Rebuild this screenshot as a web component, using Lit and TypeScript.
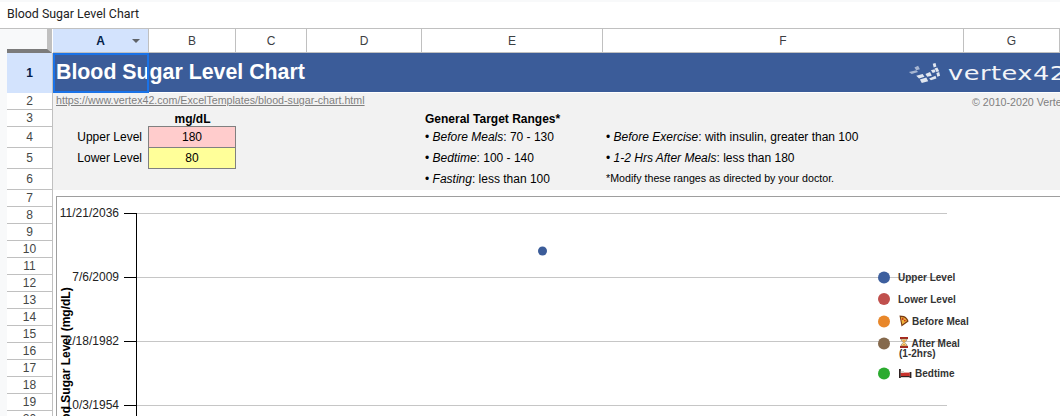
import { LitElement, html, css, svg } from "lit";
import { customElement } from "lit/decorators.js";

const COLS = ["A", "B", "C", "D", "E", "F", "G"];
const GRID_YS = [213, 277, 341, 405];
const Y_LABELS = ["11/21/2036", "7/6/2009", "2/18/1982", "10/3/1954"];
const LEGEND_DOTS: [number, string][] = [
  [277.5, "#3d5f9e"],
  [299, "#c0504d"],
  [321.5, "#e8872a"],
  [343.5, "#85694c"],
  [373.5, "#2bab2f"],
];
const LOGO_TILES = [
  "M1 10 L9 8 L11 10 L4 12 Z",
  "M7 5 L11 3 L13 7 L9 8 Z",
  "M9 14 L16 12 L18 15 L12 17 Z",
  "M13 18 L20 16 L22 20 L15 22 Z",
  "M19 12 L24 10 L26 14 L21 15 Z",
  "M23 17 L30 14 L31 17 L25 19 Z",
  "M25 8 L29 7 L30 10 L27 11 Z",
  "M27 1 L30 0 L31 4 L28 5 Z",
  "M29 6 L32 5 L34 9 L31 10 Z",
  "M31 11 L34 10 L35 14 L32 15 Z",
];

@customElement("app-root")
export class AppRoot extends LitElement {
  static styles = css`
    :host {
      display: block;
      position: relative;
      width: 1060px;
      height: 416px;
      overflow: hidden;
      box-sizing: border-box;
      padding: 2px 0 0 7px;
      background: #f8f9fa;
      font-family: "Liberation Sans", Arial, sans-serif;
      font-size: 12px;
      color: #000;
    }
    .title {
      height: 26px;
      line-height: 24px;
      background: #fff;
      border-bottom: 1px solid #c0c0c0;
      margin-left: -7px;
      padding-left: 7px;
      font-family: Roboto, "Liberation Sans", sans-serif;
      font-size: 12.4px;
      color: #222;
      white-space: nowrap;
    }
    .sheet {
      position: relative;
      display: grid;
      grid-template-columns: 46px 96px 87px 71px 115px 181px 361px 96px;
      grid-template-rows: 24px 40px 17px 17px 21px 21px 21px repeat(14, 17px);
      background: #fff;
    }
    .corner {
      box-sizing: border-box;
      background: #f8f9fa;
      border-right: 5px solid #c0c0c0;
      border-bottom: 4px solid #7b7b7b;
      margin-right: 1px;
    }
    .col {
      position: relative;
      box-sizing: border-box;
      display: flex;
      align-items: center;
      justify-content: center;
      border-right: 1px solid #c0c0c0;
      border-bottom: 1px solid #c0c0c0;
      color: #3c4043;
    }
    .col.sel {
      background: #d3e3fd;
      color: #041e49;
      font-weight: bold;
    }
    .tri {
      position: absolute;
      right: 8px;
      top: 10px;
      width: 0;
      height: 0;
      border-left: 4px solid transparent;
      border-right: 4px solid transparent;
      border-top: 4px solid #5f6368;
    }
    .rh {
      box-sizing: border-box;
      display: flex;
      align-items: center;
      justify-content: center;
      background: #fff;
      border-right: 1px solid #c0c0c0;
      border-bottom: 1px solid #c0c0c0;
      color: #444746;
      padding-bottom: 1px;
    }
    .rh.sel {
      background: #d3e3fd;
      color: #041e49;
      font-weight: bold;
      border-bottom: none;
    }
    .banner {
      grid-column: 2 / -1;
      position: relative;
      box-sizing: border-box;
      display: flex;
      align-items: center;
      background: #3b5c99;
      color: #fff;
      padding: 0 0 0 3px;
      margin-bottom: 1px;
      white-space: nowrap;
    }
    .banner-title {
      flex: 1;
      font-size: 21.33px;
      font-weight: bold;
    }
    .selection {
      position: absolute;
      left: 0;
      top: 0;
      box-sizing: border-box;
      width: 96px;
      height: 40px;
      border: 2px solid #1a73e8;
    }
    .logo {
      display: flex;
      align-items: center;
      width: 152px;
      flex: none;
    }
    .logo svg {
      flex: none;
      margin-right: 7px;
    }
    .wordmark {
      font-family: "DejaVu Sans", sans-serif;
      font-size: 20px;
      letter-spacing: 0.4px;
      color: #f2f4f8;
      line-height: 1;
      transform: scaleX(1.28);
      transform-origin: left center;
    }
    .linkrow {
      grid-column: 2 / 8;
      box-sizing: border-box;
      background: #f2f2f2;
      padding-left: 3px;
      font-size: 10.67px;
      line-height: 15px;
      color: #7f7f7f;
      text-decoration: underline;
      white-space: nowrap;
    }
    .copy {
      box-sizing: border-box;
      background: #f2f2f2;
      padding: 2px 0 0 8px;
      font-size: 10.67px;
      line-height: 15px;
      color: #7f7f7f;
      white-space: nowrap;
    }
    .c {
      box-sizing: border-box;
      display: flex;
      align-items: center;
      background: #f2f2f2;
      white-space: nowrap;
      min-width: 0;
    }
    .c.pad {
      padding-left: 3px;
    }
    .c.up {
      padding-bottom: 2px;
    }
    .c.small {
      font-size: 10.67px;
      padding-bottom: 3px;
    }
    .c.label {
      justify-content: flex-end;
      padding-right: 7px;
      padding-bottom: 2px;
    }
    .c.head {
      justify-content: center;
      font-weight: bold;
    }
    .c.hi,
    .c.lo {
      justify-content: center;
      border: 1px solid #808080;
      margin-left: -1px;
      margin-top: -1px;
    }
    .c.hi {
      background: #ffcccc;
    }
    .c.lo {
      background: #ffff99;
    }
    .c.b {
      font-weight: bold;
    }
    .chart {
      position: absolute;
      left: 49px;
      top: 167px;
      display: block;
    }
    .frame {
      fill: #fff;
      stroke: #9e9e9e;
    }
    .gridline {
      stroke: #c6c6c6;
    }
    .axis {
      stroke: #000;
    }
    .ylab {
      font-size: 12px;
      fill: #222;
      text-anchor: end;
    }
    .ytitle {
      font-size: 12px;
      font-weight: bold;
      fill: #000;
    }
    .leg {
      font-size: 10px;
      font-weight: bold;
      fill: #333;
    }
  `;

  private infoCells(row: number) {
    const rows = [
      html`<div class="c"></div><div class="c head">mg/dL</div><div class="c"></div><div class="c"></div>
        <div class="c pad b">General Target Ranges*</div><div class="c"></div><div class="c"></div>`,
      html`<div class="c label">Upper Level</div><div class="c hi">180</div><div class="c"></div><div class="c"></div>
        <div class="c pad up"><span>• <i>Before Meals</i>: 70 - 130</span></div>
        <div class="c pad up"><span>• <i>Before Exercise</i>: with insulin, greater than 100</span></div><div class="c"></div>`,
      html`<div class="c label">Lower Level</div><div class="c lo">80</div><div class="c"></div><div class="c"></div>
        <div class="c pad up"><span>• <i>Bedtime</i>: 100 - 140</span></div>
        <div class="c pad up"><span>• <i>1-2 Hrs After Meals</i>: less than 180</span></div><div class="c"></div>`,
      html`<div class="c"></div><div class="c"></div><div class="c"></div><div class="c"></div>
        <div class="c pad up"><span>• <i>Fasting</i>: less than 100</span></div>
        <div class="c pad small">*Modify these ranges as directed by your doctor.</div><div class="c"></div>`,
    ];
    return rows[row];
  }

  private chart() {
    return html`<svg class="chart" width="1004" height="220" viewBox="56 196 1004 220">
      <rect class="frame" x="56.5" y="196.5" width="1100" height="400"></rect>
      ${GRID_YS.map(
        (y, i) => svg`
          <line class="gridline" x1="136" x2="947" y1=${y + 0.5} y2=${y + 0.5}></line>
          <line class="axis" x1="124" x2="136" y1=${y + 0.5} y2=${y + 0.5}></line>
          <text class="ylab" x="119" y=${y + 4}>${Y_LABELS[i]}</text>`
      )}
      <line class="axis" x1="136.5" x2="136.5" y1="213" y2="416"></line>
      <text class="ytitle" transform="translate(70 440) rotate(-90)">Blood Sugar Level (mg/dL)</text>
      <circle cx="542.5" cy="251" r="4.5" fill="#3b5c99"></circle>
      ${LEGEND_DOTS.map(([y, c]) => svg`<circle cx="884" cy=${y} r="6" fill=${c}></circle>`)}
      <text class="leg" x="898" y="280.5">Upper Level</text>
      <text class="leg" x="898" y="302.5">Lower Level</text>
      <g>
        <path d="M899.5 315.5 L904 316 Q908 318 908.5 321.5 L901.5 326.5 Z" fill="#7a3b12"></path>
        <path d="M900.8 317 L904 317.4 Q906.6 318.8 907 321 L902.2 324.4 Z" fill="#f0b23c"></path>
        <circle cx="902.7" cy="319" r="1" fill="#c8321e"></circle>
        <circle cx="904.8" cy="320.6" r="0.9" fill="#c8321e"></circle>
      </g>
      <text class="leg" x="912" y="324.5">Before Meal</text>
      <g>
        <rect x="900" y="337" width="8" height="2" fill="#a8281e"></rect>
        <rect x="900" y="346" width="8" height="2" fill="#a8281e"></rect>
        <path d="M901 339 H907 V340 L904.8 342.5 L907 345 V346 H901 V345 L903.2 342.5 L901 340 Z" fill="#f6dfa0" stroke="#6d5a45" stroke-width="0.5"></path>
        <path d="M902.2 340.2 H905.8 L904 342.4 Z M902 345.5 L904 343.5 L906 345.5 Z" fill="#e8952c"></path>
      </g>
      <text class="leg" x="911.5" y="346.5">After Meal</text>
      <text class="leg" x="899" y="356.5">(1-2hrs)</text>
      <g>
        <rect x="899" y="369" width="1.8" height="9" fill="#2f2222"></rect>
        <rect x="909.6" y="372" width="1.8" height="6" fill="#2f2222"></rect>
        <rect x="900.8" y="376" width="9" height="1.2" fill="#2f2222"></rect>
        <rect x="900.8" y="372.6" width="9" height="3.4" fill="#c8322c"></rect>
        <rect x="900.8" y="371" width="3.2" height="2" fill="#d9d2cc"></rect>
      </g>
      <text class="leg" x="915" y="376.5">Bedtime</text>
    </svg>`;
  }

  render() {
    const infoRows = [3, 4, 5, 6];
    const plainRows = Array.from({ length: 14 }, (_, i) => i + 7);
    return html`
      <div class="title">Blood Sugar Level Chart</div>
      <div class="sheet">
        <div class="corner"></div>
        ${COLS.map(
          (c, i) =>
            html`<div class="col ${i === 0 ? "sel" : ""}">${c}${i === 0 ? html`<span class="tri"></span>` : ""}</div>`
        )}
        <div class="rh sel">1</div>
        <div class="banner">
          <div class="selection"></div>
          <div class="banner-title">Blood Sugar Level Chart</div>
          <div class="logo">
            <svg width="33" height="22" viewBox="0 0 36 22">
              ${LOGO_TILES.map((d, i) => svg`<path d=${d} fill="#fff" opacity=${i < 2 ? 0.55 : 0.85}></path>`)}
            </svg>
            <span class="wordmark">vertex42</span>
          </div>
        </div>
        <div class="rh">2</div>
        <div class="linkrow">https://www.vertex42.com/ExcelTemplates/blood-sugar-chart.html</div>
        <div class="copy">© 2010-2020 Vertex42</div>
        ${infoRows.map((r, i) => html`<div class="rh">${r}</div>${this.infoCells(i)}`)}
        ${plainRows.map((r) => html`<div class="rh" style="grid-column:1">${r}</div>`)}
        ${this.chart()}
      </div>
    `;
  }
}
